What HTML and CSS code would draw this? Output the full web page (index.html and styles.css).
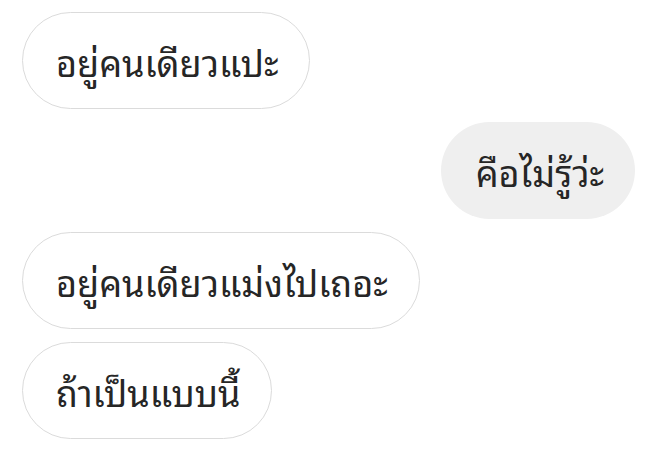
FILE: index.html
```html
<!DOCTYPE html>
<html lang="th">
<head>
<meta charset="utf-8">
<title>แชท</title>
<link rel="stylesheet" href="styles.css">
</head>
<body>
<div class="thread">
  <div class="msg msg-in">อยู่คนเดียวแปะ</div>
  <div class="msg msg-out">คือไม่รู้ว่ะ</div>
  <div class="msg msg-in">อยู่คนเดียวแม่งไปเถอะ</div>
  <div class="msg msg-in">ถ้าเป็นแบบนี้</div>
</div>
</body>
</html>
```
FILE: styles.css
```css
html, body {
  margin: 0;
  background: #ffffff;
}

.thread {
  display: flex;
  flex-direction: column;
  align-items: flex-start;
  gap: 13px;
  padding: 12px 16px 0 22px;
  font-family: "Noto Sans Thai Looped", "Loma", "Garuda", "Tlwg Typo", "Noto Sans Thai", sans-serif;
  color: #262626;
}

.msg {
  box-sizing: border-box;
  height: 97px;
  display: flex;
  align-items: center;
  padding: 0 31px 0 33px;
  border-radius: 48.5px;
  font-size: 36px;
  white-space: nowrap;
}

.msg-in {
  border: 1.5px solid #dbdbdb;
}

.msg-out {
  align-self: flex-end;
  background: #efefef;
  padding-left: 35px;
}
```
